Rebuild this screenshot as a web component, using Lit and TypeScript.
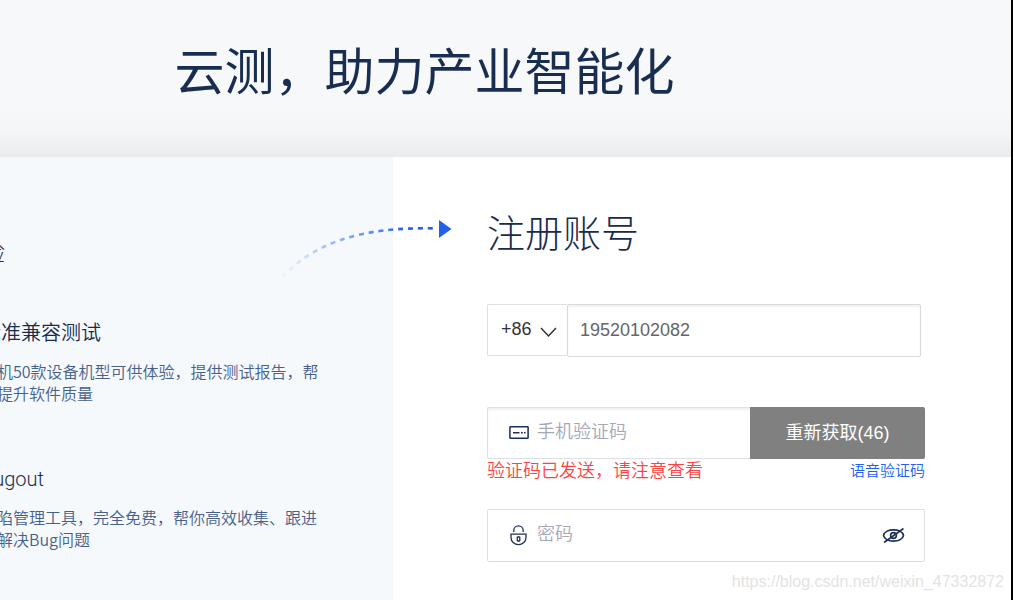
import { LitElement, html, css } from "lit";
import { customElement, state } from "lit/decorators.js";

@customElement("app-root")
export class AppRoot extends LitElement {
  @state() private showPassword = false;
  @state() private phone = "19520102082";

  static styles = css`
    :host {
      display: block;
      font-family: "Liberation Sans", "Noto Sans CJK SC", sans-serif;
      color: #162b4e;
    }
    * {
      box-sizing: border-box;
    }
    h1, h2, h3, p {
      margin: 0;
      font-weight: 300;
    }
    .page {
      position: relative;
      display: flex;
      flex-direction: column;
      min-height: 100vh;
      border-right: 2px solid #000;
      background: #fff;
      overflow: hidden;
    }
    .banner {
      padding: 28px 162px 49px 0;
      text-align: center;
      background: linear-gradient(#f7f8fa 68%, #f3f5f6 84%, #eaebed);
    }
    .banner h1 {
      font-family: "Noto Sans CJK SC", sans-serif;
      font-size: 50px;
      line-height: 80px;
      font-weight: 400;
      color: #182d50;
    }
    .columns {
      flex: 1;
      display: grid;
      grid-template-columns: minmax(0, 393fr) minmax(0, 618fr);
    }
    .intro {
      background: #f5f9fc;
      padding-top: 78px;
      overflow: hidden;
      font-family: "Noto Sans CJK SC", sans-serif;
      white-space: nowrap;
    }
    .intro-inner {
      margin-left: -19px;
    }
    .intro h2 {
      font-size: 24px;
      line-height: 32px;
    }
    .feature {
      padding-top: 51px;
    }
    .feature + .feature {
      padding-top: 60px;
    }
    .feature h3 {
      font-family: Roboto, "Noto Sans CJK SC", sans-serif;
      font-size: 20px;
      line-height: 30px;
      font-weight: 350;
    }
    .feature p {
      margin-top: 12px;
      font-size: 16px;
      line-height: 22px;
      font-weight: 350;
      color: #476089;
    }
    .signup {
      position: relative;
      padding: 46px 86px 38px 94px;
    }
    .arrow {
      position: absolute;
      left: -113px;
      top: 59px;
    }
    .signup h2 {
      font-family: "Noto Sans CJK SC", sans-serif;
      font-size: 38px;
      line-height: 56px;
    }
    form {
      margin-top: 45px;
    }
    .phone {
      display: flex;
      align-items: flex-start;
      padding-right: 4px;
    }
    .country {
      display: grid;
      align-items: center;
      width: 80px;
      height: 52px;
      border: 1px solid #dedfe2;
      border-right: 0;
      border-radius: 2px 0 0 2px;
    }
    .country select,
    .country svg {
      grid-area: 1 / 1;
    }
    .country svg {
      justify-self: end;
      margin: 4px 10px 0 0;
      pointer-events: none;
    }
    select {
      appearance: none;
      width: 100%;
      height: 48px;
      padding: 0 0 2px 13px;
      border: 0;
      background: none;
      font: 18px "Liberation Sans", sans-serif;
      color: #333;
    }
    input {
      min-width: 0;
      flex: 1;
      height: 50px;
      padding: 0 0 2px;
      border: 0;
      outline: 0;
      background: none;
      font: 350 18px "Liberation Sans", "Noto Sans CJK SC", sans-serif;
      color: #666;
    }
    input::placeholder {
      color: #a4a9b5;
      opacity: 1;
    }
    .number {
      height: 53px;
      padding: 0 12px;
      border: 1px solid #d9dadd;
      border-radius: 2px;
      box-shadow: inset 0 2px 2px #f1f1f2;
    }
    .code {
      display: flex;
      margin-top: 50px;
    }
    .field {
      flex: 1;
      min-width: 0;
      display: flex;
      align-items: center;
      gap: 8px;
      height: 52px;
      padding: 0 19px 0 21px;
      border: 1px solid #dedfe2;
      border-radius: 2px;
    }
    .code .field {
      border-right: 0;
      border-radius: 2px 0 0 2px;
      box-shadow: inset 0 2px 2px #f1f1f2;
    }
    .field label {
      display: flex;
    }
    .resend {
      flex: 0 0 40%;
      height: 52px;
      padding: 0 0 4px;
      border: 0;
      border-radius: 0 2px 2px 0;
      background: #808080;
      color: #fff;
      font: 400 18px "Liberation Sans", "Noto Sans CJK SC", sans-serif;
    }
    .hint {
      display: flex;
      justify-content: space-between;
      align-items: center;
      height: 24px;
    }
    .error {
      font-size: 18px;
      line-height: 24px;
      font-weight: 350;
      color: #ff4343;
    }
    .hint a {
      font-size: 15px;
      line-height: 24px;
      font-weight: 350;
      color: #2161ee;
      text-decoration: none;
    }
    .secret {
      margin-top: 26px;
      height: 53px;
    }
    .eye {
      display: flex;
      padding: 0;
      border: 0;
      background: none;
    }
    .mark {
      position: absolute;
      right: 7px;
      bottom: 8px;
      font-size: 16px;
      line-height: 20px;
      color: #e3e3e3;
    }
  `;

  private onPhone(e: Event) {
    this.phone = (e.target as HTMLInputElement).value;
  }

  render() {
    return html`
      <div class="page">
        <header class="banner"><h1>云测，助力产业智能化</h1></header>
        <main class="columns">
          <section class="intro">
            <div class="intro-inner">
              <h2>验</h2>
              <article class="feature">
                <h3>标准兼容测试</h3>
                <p>真机50款设备机型可供体验，提供测试报告，帮<br />助提升软件质量</p>
              </article>
              <article class="feature">
                <h3>Bugout</h3>
                <p>缺陷管理工具，完全免费，帮你高效收集、跟进<br />并解决Bug问题</p>
              </article>
            </div>
          </section>
          <section class="signup">
            <svg class="arrow" width="174" height="64" viewBox="280 216 174 64" fill="none" aria-hidden="true">
              <defs>
                <linearGradient id="fade" gradientUnits="userSpaceOnUse" x1="278" y1="278" x2="405" y2="228">
                  <stop offset="0" stop-color="#6fa0fa" stop-opacity="0" />
                  <stop offset="0.5" stop-color="#4a85f4" stop-opacity="0.6" />
                  <stop offset="1" stop-color="#2161ee" />
                </linearGradient>
              </defs>
              <path d="M282 277C312 247 352 226 437 228.500" stroke="url(#fade)" stroke-width="2.600" stroke-dasharray="5 4.900" />
              <path d="M439 220l12.500 9-12.500 9z" fill="#2161ee" />
            </svg>
            <h2>注册账号</h2>
            <form @submit=${(e: Event) => e.preventDefault()}>
              <div class="phone">
                <div class="country">
                  <select aria-label="国家区号"><option>+86</option></select>
                  <svg width="17" height="12" viewBox="0 0 17 12" fill="none" stroke="#333" stroke-width="1.500">
                    <path d="M1 2l7.500 8L16 2" />
                  </svg>
                </div>
                <input class="number" type="tel" aria-label="手机号" .value=${this.phone} @input=${this.onPhone} />
              </div>
              <div class="code">
                <div class="field">
                  <label for="code" aria-label="手机验证码">
                    <svg width="20" height="20" viewBox="0 0 20 20" fill="none" stroke="#1e2f55">
                      <rect x="0.900" y="3.800" width="18.200" height="11.500" rx="0.500" stroke-width="1.500" />
                      <path d="M4 9.800h6.500M12 9.800h1.800M15 9.800h1.500" stroke-width="1.500" />
                    </svg>
                  </label>
                  <input id="code" type="text" placeholder="手机验证码" />
                </div>
                <button class="resend" type="button">重新获取(46)</button>
              </div>
              <div class="hint">
                <p class="error">验证码已发送，请注意查看</p>
                <a href="#voice">语音验证码</a>
              </div>
              <div class="field secret">
                <label for="password" aria-label="密码">
                  <svg width="20" height="22" viewBox="0 0 20 22" fill="none" stroke="#1e2f55" stroke-width="1.300">
                    <path d="M4.800 7V5.500a4.700 4.700 0 0 1 9.400 0V7" />
                    <path d="M2 9.200h15v3.300a7.500 7.200 0 0 1-15 0z" />
                    <rect x="8.300" y="12" width="2.500" height="4" rx="0.600" />
                  </svg>
                </label>
                <input id="password" type=${this.showPassword ? "text" : "password"} placeholder="密码" />
                <button class="eye" type="button" aria-label="显示密码"
                  @click=${() => (this.showPassword = !this.showPassword)}>
                  <svg width="24" height="18" viewBox="0 0 24 18" fill="none" stroke="#1e2f55" stroke-width="1.600">
                    <path d="M2.500 8.500c1.500-7.500 18.500-7.500 20 0-1.500 7.500-18.500 7.500-20 0z" />
                    <circle cx="12.500" cy="8.500" r="2.900" />
                    <path d="M3 15.500L22.500 1.500" />
                  </svg>
                </button>
              </div>
            </form>
          </section>
        </main>
        <span class="mark">https://blog.csdn.net/weixin_47332872</span>
      </div>
    `;
  }
}
